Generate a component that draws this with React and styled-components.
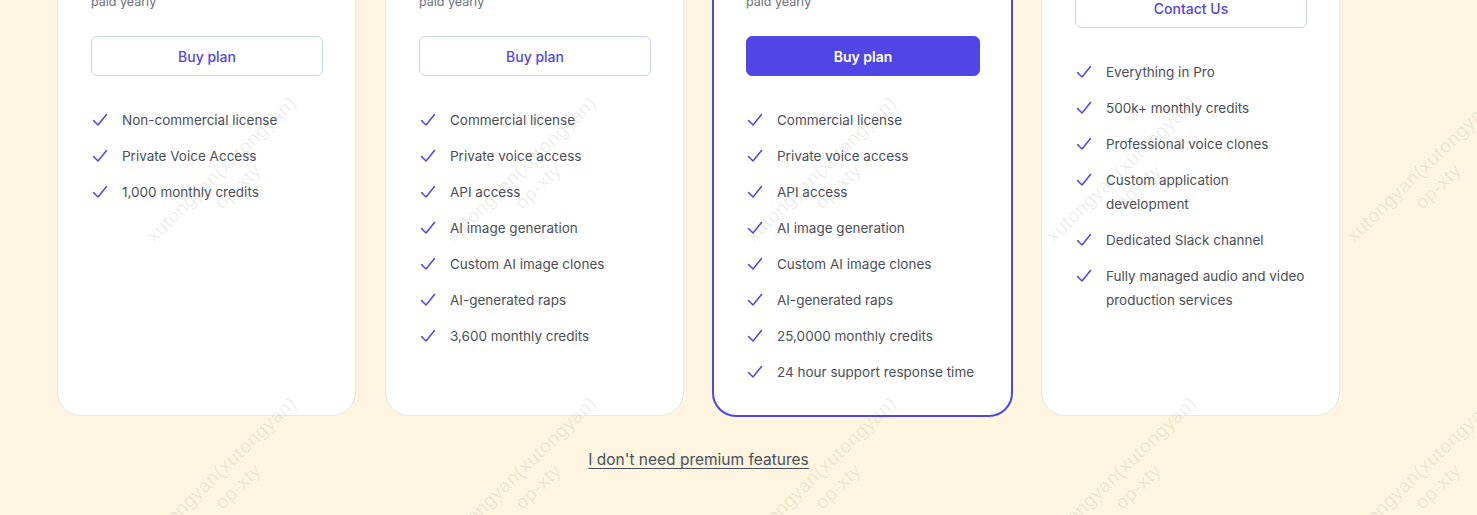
import React from 'react';
import styled, { createGlobalStyle, css } from 'styled-components';

const GlobalStyle = createGlobalStyle`
	html, body {
		margin: 0;
		padding: 0;
		background: #fdf5df;
		font-family: Inter, "Noto Sans", "Liberation Sans", sans-serif;
		overflow: hidden;
	}
`

const Page = styled.div`
	position: relative;
	display: flow-root;
	min-height: 515px;
	padding-left: 57px;
`

const Plans = styled.div`
	display: grid;
	grid-template-columns: repeat(4, 299px);
	column-gap: 29px;
	margin-top: -121px;
`

const Card = styled.div`
	display: flex;
	flex-direction: column;
	background: #fff;
	border: 1px solid #e7e8ec;
	border-radius: 24px;
	padding: 32px 32px 32px 33px;
	${props => props.featured && css`
		border: 2px solid #4f46e5;
		margin: 0 -1px -1px;
		padding: 31px 31px 31px 32px;
	`}
`

const PlanName = styled.div`
	font-size: 18px;
	line-height: 28px;
	font-weight: 600;
	color: #111827;
`

const Price = styled.div`
	margin-top: ${props => props.small ? '0' : '8px'};
	font-size: ${props => props.small ? '20px' : '36px'};
	line-height: ${props => props.small ? '24px' : '44px'};
	font-weight: 700;
	color: #111827;
`

const Billing = styled.div`
	font-size: 12.5px;
	line-height: 20px;
	color: #6b6f78;
`

const Button = styled.button`
	display: block;
	width: 100%;
	height: 40px;
	margin-top: 24px;
	border-radius: 6px;
	font-family: inherit;
	font-size: 14px;
	font-weight: 500;
	cursor: pointer;
	${props => props.primary ? css`
		background: #4f46e5;
		border: 1px solid #4f46e5;
		color: #fff;
		font-weight: 600;
	` : css`
		background: #fff;
		border: 1px solid #c9d3fb;
		color: #4f46e5;
	`}
`

const Features = styled.ul`
	list-style: none;
	margin: 32px 0 0;
	padding: 0;
	display: flex;
	flex-direction: column;
	gap: 12px;
`

const Feature = styled.li`
	display: flex;
	align-items: flex-start;
	gap: 14px;
	font-size: 13.5px;
	line-height: 24px;
	color: #4b4f58;
`

const Check = styled.svg`
	flex: none;
	width: 16px;
	height: 16px;
	margin: 4px 0 0 1px;
`

const Footer = styled.div`
	width: 1283px;
	margin-top: 32px;
	text-align: center;
`

const SkipLink = styled.a`
	font-size: 15.5px;
	line-height: 24px;
	color: #4b4f58;
	text-decoration: underline;
	text-underline-offset: 3px;
	cursor: pointer;
`

const Watermarks = styled.div`
	position: absolute;
	inset: 0;
	overflow: hidden;
	pointer-events: none;
`

const Mark = styled.div`
	position: absolute;
	width: 300px;
	margin-left: -150px;
	margin-top: -24px;
	transform: rotate(-44deg);
	text-align: center;
	font-family: "Liberation Sans", sans-serif;
	font-size: 19px;
	letter-spacing: 0.6px;
	line-height: 24px;
	color: rgba(60, 50, 30, 0.09);
	white-space: nowrap;
`

const CheckIcon = () => (
	<Check viewBox="0 0 16 16" fill="none">
		<polyline points="1.5,8.5 6,13 14.5,2.5" stroke="#4f46e5" strokeWidth="1.5" strokeLinecap="round" strokeLinejoin="round" />
	</Check>
)

const plans = [
	{
		name: 'Starter',
		price: '$9',
		button: 'Buy plan',
		features: ['Non-commercial license', 'Private Voice Access', '1,000 monthly credits'],
	},
	{
		name: 'Creator',
		price: '$29',
		button: 'Buy plan',
		features: ['Commercial license', 'Private voice access', 'API access', 'AI image generation', 'Custom AI image clones', 'AI-generated raps', '3,600 monthly credits'],
	},
	{
		name: 'Pro',
		price: '$99',
		button: 'Buy plan',
		featured: true,
		features: ['Commercial license', 'Private voice access', 'API access', 'AI image generation', 'Custom AI image clones', 'AI-generated raps', '25,0000 monthly credits', '24 hour support response time'],
	},
	{
		name: 'Enterprise',
		price: 'Custom',
		button: 'Contact Us',
		custom: true,
		features: ['Everything in Pro', '500k+ monthly credits', 'Professional voice clones', 'Custom application development', 'Dedicated Slack channel', 'Fully managed audio and video production services'],
	},
]

const marks = []
for (let i = 0; i < 6; i++) {
	for (let j = -1; j < 2; j++) {
		marks.push({ x: -70 + i * 300, y: 178 + j * 300 })
	}
}

function App() {
	return (
		<Page>
			<GlobalStyle />
			<Plans>
				{plans.map(plan => (
					<Card key={plan.name} featured={plan.featured}>
						<PlanName>{plan.name}</PlanName>
						<Price small={plan.custom}>{plan.price}</Price>
						{!plan.custom && <Billing>paid yearly</Billing>}
						<Button primary={plan.featured}>{plan.button}</Button>
						<Features>
							{plan.features.map(item => (
								<Feature key={item}>
									<CheckIcon />
									<span>{item}</span>
								</Feature>
							))}
						</Features>
					</Card>
				))}
			</Plans>
			<Footer>
				<SkipLink>I don't need premium features</SkipLink>
			</Footer>
			<Watermarks>
				{marks.map(m => (
					<Mark key={m.x + '-' + m.y} style={{ left: m.x, top: m.y }}>
						xutongyan(xutongyan)<br />op-xty
					</Mark>
				))}
			</Watermarks>
		</Page>
	)
}

export default App;
